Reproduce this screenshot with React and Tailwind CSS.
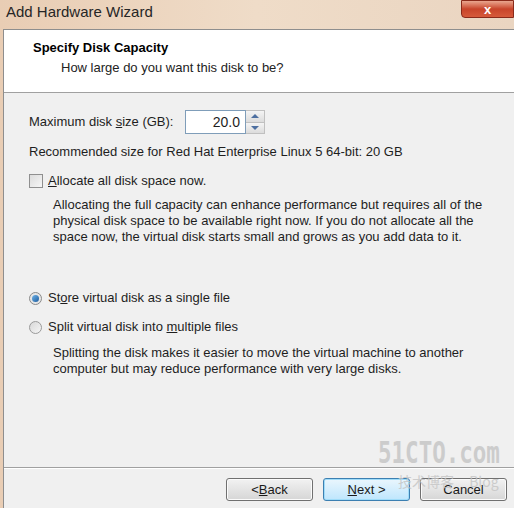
const ui = { fontFamily: '"Liberation Sans", "DejaVu Sans", sans-serif' }

function Btn({ children, primary }) {
  return (
    <button
      className={
        'h-[23px] w-[87px] rounded-[3px] border text-[13px] leading-none text-[#1a1a1a] flex items-center justify-center ' +
        (primary
          ? 'border-[#3c7fb1] bg-gradient-to-b from-[#eaf6fd] to-[#bee6fd] shadow-[inset_0_0_0_1px_#9fdcf9]'
          : 'border-[#707070] bg-gradient-to-b from-[#f2f2f2] to-[#d6d6d6] shadow-[inset_0_0_0_1px_#fbfbfb]')
      }
    >
      {children}
    </button>
  )
}

export default function App() {
  return (
    <div style={ui} className="relative w-[514px] h-[508px] overflow-hidden bg-gradient-to-r from-[#e9cdb4] via-[#efdcc8] to-[#ead5c1] flex flex-col">
      {/* barra de título */}
      <div className="h-[29px] flex items-center pl-[6px] shrink-0">
        <span className="text-[15px] text-[#262626] -mt-[4px]">Add Hardware Wizard</span>
      </div>
      <div className="absolute top-0 right-0 w-[53px] h-[18px] rounded-bl-[4px] border border-[#8a2a1a] bg-gradient-to-b from-[#e9a58e] via-[#c8442a] to-[#d65a3b] flex items-center justify-center">
        <span className="text-white font-bold text-[13px] leading-none">x</span>
      </div>

      <div className="ml-[3px] flex-1 flex flex-col border-l border-t border-[#8e8e8e] bg-[#f0f0f0]">
        {/* encabezado */}
        <div className="h-[63px] bg-white border-b border-[#a0a0a0] pl-[29px] pt-[10px] shrink-0">
          <p className="text-[13px] font-bold text-black leading-[16px]">Specify Disk Capacity</p>
          <p className="text-[13px] text-[#222] leading-[16px] mt-[4px] pl-[28px]">How large do you want this disk to be?</p>
        </div>

        <div className="flex-1 pl-[25px] pr-3 pt-[17px] text-[13px] leading-[16px] text-[#1e1e1e]">
          <div className="flex items-center">
            <span className="w-[156px]">Maximum disk <u>s</u>ize (GB):</span>
            <div className="flex h-[24px]">
              <div className="w-[61px] border border-[#7f9db9] bg-white flex items-center justify-end pr-[5px] text-[14px]">20.0</div>
              <div className="flex flex-col w-[19px] border border-l-0 border-[#c0c0c0] bg-[#eaeaea]">
                <div className="flex-1 flex items-center justify-center border-b border-[#c0c0c0] bg-gradient-to-b from-[#f4f4f4] to-[#dcdcdc]">
                  <span className="block w-0 h-0 border-l-[4px] border-r-[4px] border-b-[4px] border-l-transparent border-r-transparent border-b-[#4d6fa0]" />
                </div>
                <div className="flex-1 flex items-center justify-center bg-gradient-to-b from-[#f4f4f4] to-[#dcdcdc]">
                  <span className="block w-0 h-0 border-l-[4px] border-r-[4px] border-t-[4px] border-l-transparent border-r-transparent border-t-[#4d6fa0]" />
                </div>
              </div>
            </div>
          </div>

          <p className="mt-[10px]">Recommended size for Red Hat Enterprise Linux 5 64-bit: 20 GB</p>

          <div className="flex items-center h-[16px] mt-[13px]">
            <span className="w-[14px] h-[14px] border border-[#8f8f8f] bg-gradient-to-br from-[#dcdcdc] to-[#f6f6f6] mr-[5px]" />
            <span><u>A</u>llocate all disk space now.</span>
          </div>

          <p className="mt-[8px] ml-[24px] pr-2">
            Allocating the full capacity can enhance performance but requires all of the physical disk space to be available right now. If you do not allocate all the space now, the virtual disk starts small and grows as you add data to it.
          </p>

          <div className="flex items-center h-[16px] mt-[45px]">
            <span className="w-[13px] h-[13px] rounded-full border border-[#8a8a8a] bg-[#e6e6e6] flex items-center justify-center mr-[6px]">
              <span className="w-[7px] h-[7px] rounded-full bg-gradient-to-br from-[#6fb3e8] to-[#1c5d9e]" />
            </span>
            <span>St<u>o</u>re virtual disk as a single file</span>
          </div>

          <div className="flex items-center h-[16px] mt-[13px]">
            <span className="w-[13px] h-[13px] rounded-full border border-[#9a9a9a] bg-gradient-to-br from-[#d8d8d8] to-[#f6f6f6] mr-[6px]" />
            <span>Split virtual disk into <u>m</u>ultiple files</span>
          </div>

          <p className="mt-[10px] ml-[24px]">
            Splitting the disk makes it easier to move the virtual machine to another computer but may reduce performance with very large disks.
          </p>
        </div>

        {/* pie con botones */}
        <div className="h-[41px] border-t border-[#a0a0a0] shadow-[inset_0_1px_0_#ffffff] flex items-start justify-end gap-[10px] pt-[10px] pr-[7px] shrink-0">
          <Btn>&lt; <u>B</u>ack</Btn>
          <Btn primary><u>N</u>ext &gt;</Btn>
          <Btn>Cancel</Btn>
        </div>
      </div>

      {/* marca de agua */}
      <div className="absolute left-[378px] top-[438px] pointer-events-none text-[#c4c4c4] opacity-80">
        <p className="text-[30px] font-bold leading-none origin-left scale-x-[0.75] whitespace-nowrap" style={{ fontFamily: '"DejaVu Sans Mono", monospace' }}>51CTO.com</p>
        <p className="text-[14px] leading-none mt-[6px] ml-[20px] whitespace-nowrap" style={{ fontFamily: '"Noto Sans CJK SC", sans-serif' }}>技术博客 <span className="ml-3">Blog</span></p>
      </div>
    </div>
  )
}
